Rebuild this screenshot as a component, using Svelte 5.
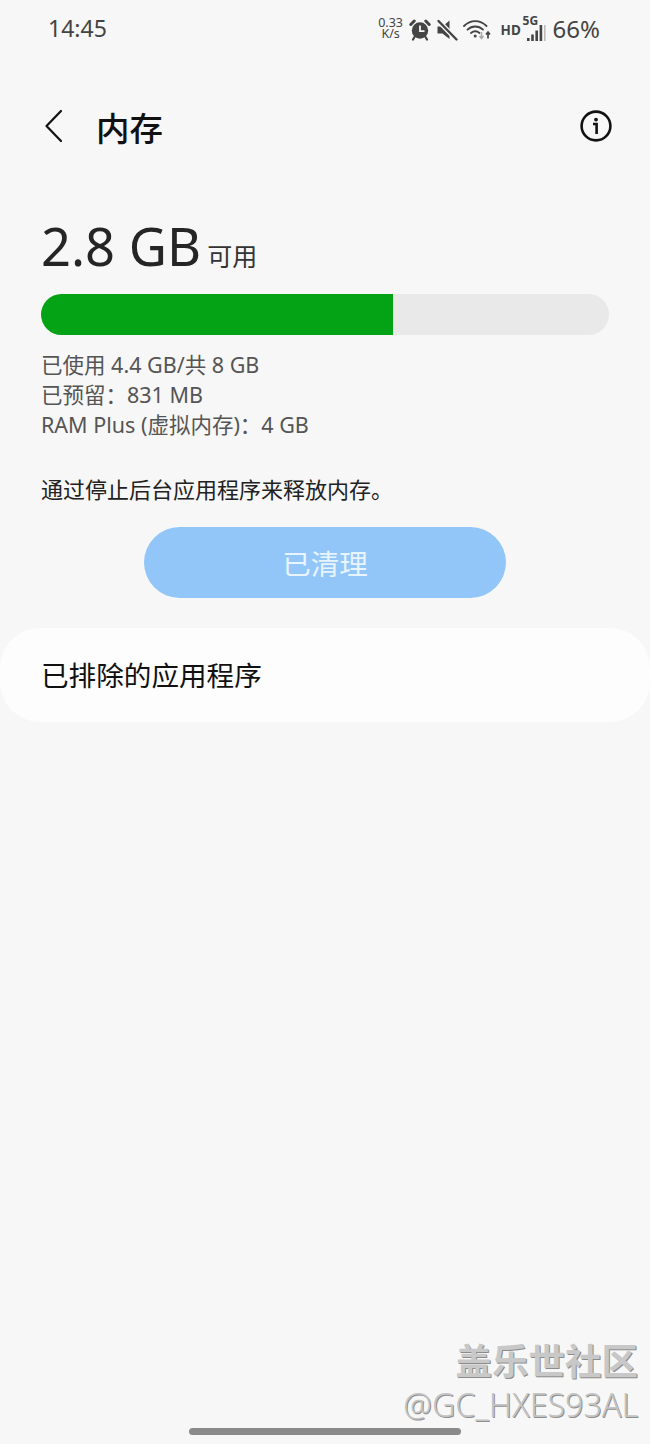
<script>
  const details = ['已使用 4.4 GB/共 8 GB', '已预留：831 MB', 'RAM Plus (虚拟内存)：4 GB']
  let usedPercent = $state(61.9)
</script>

<div class="screen">
  <!-- status bar -->
  <div class="status">
    <span class="time">14:45</span>
    <div class="status-right">
      <span class="speed">0.33<br />K/s</span>
      <svg class="ic alarm" width="22" height="22" viewBox="0 0 22 22" aria-hidden="true">
        <circle cx="11" cy="11.5" r="8.2" fill="#444" />
        <path d="M11 6.5V12.2H15.5" fill="none" stroke="#f7f7f7" stroke-width="1.8" />
        <path d="M1.8 5.5 5.2 2 M20.2 5.5 16.8 2" stroke="#444" stroke-width="3" stroke-linecap="round" />
        <path d="M5.5 18 4 20.5 M16.5 18 18 20.5" stroke="#444" stroke-width="2.2" stroke-linecap="round" />
      </svg>
      <svg class="ic mute" width="22" height="22" viewBox="0 0 22 22" aria-hidden="true">
        <path d="M1.5 7.5H6.5L13.5 1.5V20L6.5 14.5H1.5Z" fill="#444" />
        <path d="M2.5 2 20.5 20.5" stroke="#f7f7f7" stroke-width="5" />
        <path d="M2.5 2 20.5 20.5" stroke="#444" stroke-width="2.4" stroke-linecap="round" />
      </svg>
      <svg class="ic wifi" width="30" height="22" viewBox="0 0 30 22" aria-hidden="true">
        <path d="M2 8C8.5 1.5 18 1.5 24.5 8 M5.5 11.6C10 7.4 16.5 7.4 21 11.6 M9 15C11.5 13 15 13 17.5 15" fill="none" stroke="#444" stroke-width="1.9" stroke-linecap="round" />
        <circle cx="13.2" cy="18" r="1.5" fill="#444" />
        <path d="M19.5 14V20 M17.5 18 19.5 20.5 21.5 18" fill="none" stroke="#aaa" stroke-width="1.5" />
        <path d="M26 20.5V14 M24 16.5 26 14 28 16.5" fill="none" stroke="#444" stroke-width="1.7" />
      </svg>
      <span class="hd">HD</span>
      <div class="signal">
        <span class="fiveg">5G</span>
        <svg width="20" height="16" viewBox="0 0 20 16" aria-hidden="true">
          <path d="M1 16V13H3.6V16Z M5.2 16V9.5H7.8V16Z M9.4 16V5.5H12V16Z M13.6 16V0H16.2V16Z" fill="#444" />
          <path d="M18 16V0H19.6V16Z" fill="#bbb" />
        </svg>
      </div>
      <span class="battery">66%</span>
    </div>
  </div>

  <!-- title bar -->
  <header class="bar">
    <svg class="back" width="20" height="34" viewBox="0 0 20 34" aria-hidden="true">
      <path d="M17 2 2.5 17 17 32" fill="none" stroke="#111" stroke-width="2.2" stroke-linecap="round" stroke-linejoin="round" />
    </svg>
    <h1>内存</h1>
    <svg class="info" width="34" height="34" viewBox="0 0 34 34" aria-hidden="true">
      <circle cx="17" cy="17" r="14.4" fill="none" stroke="#111" stroke-width="2.6" />
      <circle cx="17" cy="10.6" r="1.9" fill="#111" />
      <path d="M14 15H17.6V25" fill="none" stroke="#111" stroke-width="2.6" />
    </svg>
  </header>

  <main class="memory">
    <div class="free"><span class="amount">2.8 GB</span><span class="unit">可用</span></div>
    <div class="track"><div class="fill" style="width: {usedPercent}%"></div></div>
    <div class="details">
      {#each details as line}
        <div>{line}</div>
      {/each}
    </div>
    <p class="hint">通过停止后台应用程序来释放内存。</p>
    <button class="clean">已清理</button>
  </main>

  <div class="row">已排除的应用程序</div>

  <div class="watermark">
    <div class="wm-name">盖乐世社区</div>
    <div class="wm-user">@GC_HXES93AL</div>
  </div>
  <div class="home"></div>
</div>

<style>
  :global(body) { margin: 0; background: #f7f7f7; }

  .screen {
    position: relative;
    width: 650px;
    height: 1444px;
    overflow: hidden;
    background: #f7f7f7;
    font-family: "Noto Sans", "Noto Sans CJK SC", sans-serif;
    color: #111;
  }

  .status {
    height: 58px;
    padding: 0 50px 2px 48px;
    box-sizing: border-box;
    display: flex;
    align-items: center;
    justify-content: space-between;
    color: #444;
  }
  .time { font-size: 23px; }
  .status-right { display: flex; align-items: center; }
  .speed { font-size: 12.5px; line-height: 11px; text-align: center; width: 26px; margin-right: 5px; white-space: nowrap; }
  .ic { margin-right: 5px; }
  .alarm { margin-top: 3px; }
  .mute { margin-top: 3px; }
  .wifi { margin-right: 9px; margin-left: -1px; margin-top: 1px; }
  .hd { width: 18px; font-size: 13.5px; font-weight: 700; margin-right: 3px; margin-top: 3px; white-space: nowrap; }
  .signal { position: relative; width: 24px; height: 24px; margin-right: 7px; margin-top: 1px; }
  .signal svg { position: absolute; right: 0; bottom: 0; }
  .fiveg { position: absolute; left: 1px; top: -2px; font-size: 12px; font-weight: 700; line-height: 12px; }
  .battery { font-size: 24px; }

  .bar {
    height: 68px;
    padding: 0 37px 0 44px;
    display: flex;
    align-items: center;
    margin-top: 34px;
  }
  .back { margin-right: 32px; }
  h1 { margin: 0; font-size: 33.5px; font-weight: 500; flex: 1; color: #111; }

  .memory { padding: 0 41px; display: flex; flex-direction: column; }
  .free { margin-top: 55px; height: 62px; display: flex; align-items: baseline; color: #252525; }
  .amount { font-size: 52.5px; line-height: 62px; }
  .unit { font-size: 25px; margin-left: 6px; color: #333; }

  .track { margin-top: 17px; height: 41px; border-radius: 21px; background: #e9e9e9; overflow: hidden; width: 568px; }
  .fill { height: 100%; background: #04a315; }

  .details { margin-top: 15px; font-size: 21.5px; line-height: 30px; color: #555; }
  .hint { margin: 34px 0 0; font-size: 22px; line-height: 30px; color: #222; }

  .clean {
    align-self: center;
    margin-top: 23px;
    width: 362px;
    height: 71px;
    border: none;
    border-radius: 36px;
    background: #93c6f8;
    color: #e8f4fe;
    font-family: inherit;
    font-size: 28.5px;
  }

  .row {
    margin-top: 30px;
    height: 94px;
    box-sizing: border-box;
    padding: 0 0 2px 41px;
    border-radius: 40px;
    background: #fdfdfd;
    display: flex;
    align-items: center;
    font-size: 27.6px;
    color: #111;
  }

  .watermark { position: absolute; right: 12px; bottom: 19px; text-align: right; }
  .wm-name { font-size: 36.5px; line-height: 44px; margin-bottom: 2px; font-weight: 700; color: #c8c8c8; text-shadow: 1px 1px 0 #8c8c8c; }
  .wm-user { font-size: 32.2px; line-height: 40px; font-weight: 300; color: #c4c4c4; text-shadow: 1px 1px 0 #8f8f8f; }

  .home { position: absolute; left: 189px; bottom: 9px; width: 272px; height: 7px; border-radius: 4px; background: #8a8a8a; }
</style>
